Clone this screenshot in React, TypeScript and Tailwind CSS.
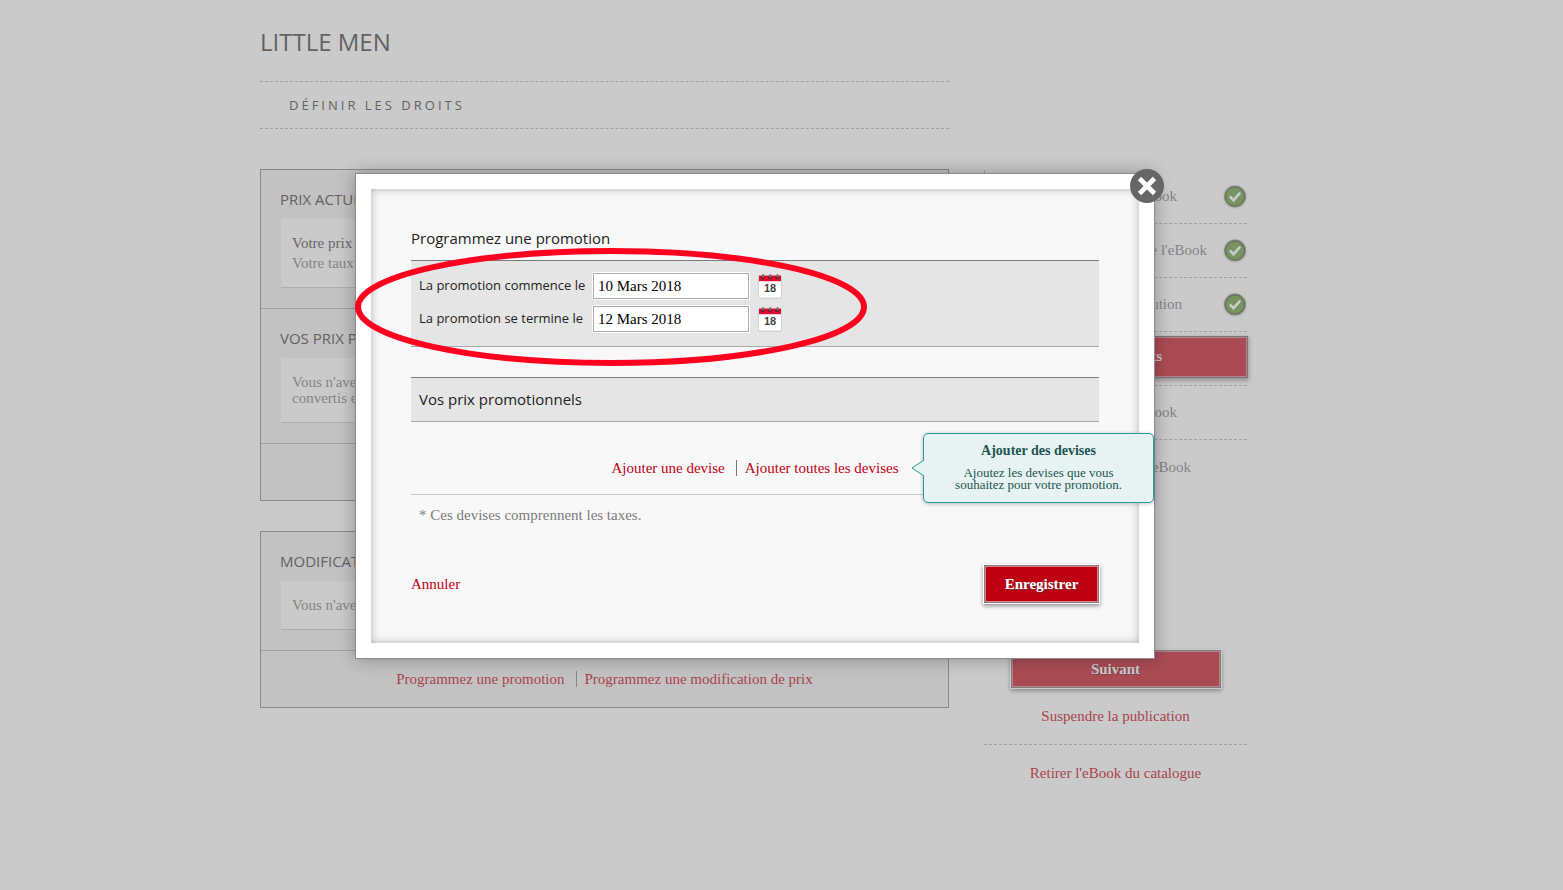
import React from "react";

const sans = "font-['Open_Sans','Trebuchet_MS',sans-serif] font-medium";
const serif = "font-[Georgia,'Liberation_Serif',serif]";

const steps = [
  { label: "Décrire l'eBook", width: "w-[192px]", state: "done" },
  { label: "Contenu de l'eBook", width: "w-[222px]", state: "done" },
  { label: "Distribution", width: "w-[197px]", state: "done" },
  { label: "Définir les droits", width: "w-[176px]", state: "current" },
  { label: "Publier l'eBook", width: "w-[192px]", state: "todo" },
  { label: "eBook", width: "w-[206px]", state: "todo" },
];

function CheckBadge() {
  return (
    <svg width="28" height="28" viewBox="0 1 28 28" aria-hidden="true" className="-mr-0.5 shrink-0">
      <circle cx="14" cy="15" r="12.5" fill="#000" opacity=".05" />
      <circle cx="14" cy="14.5" r="10.4" fill="#77935f" stroke="#8d8d8d" strokeWidth="1.2" />
      <circle cx="14" cy="14.5" r="9.6" fill="none" stroke="#5f6a58" strokeWidth="1" />
      <path d="M8.8 14.4l3.7 3.8 6.8-7.6" fill="none" stroke="#cacaca" strokeWidth="2.7" />
    </svg>
  );
}

function CalendarIcon() {
  return (
    <svg width="26" height="26" viewBox="0 0 26 26" aria-hidden="true">
      <rect x="1" y="2.5" width="24" height="23.5" rx="2" fill="#000" opacity=".08" />
      <rect x="2" y="2.5" width="22" height="22" rx="1" fill="#fff" />
      <path d="M2 2.5h22v5.7H2z" fill="#e3082f" />
      <g fill="#6f1f30">
        <circle cx="5.8" cy="4.4" r="1.9" />
        <circle cx="13" cy="4.4" r="1.9" />
        <circle cx="20.2" cy="4.4" r="1.9" />
      </g>
      <g fill="#777">
        <rect x="5.2" y="1" width="1.8" height="3.6" rx=".8" />
        <rect x="12.4" y="1" width="1.8" height="3.6" rx=".8" />
        <rect x="19.6" y="1" width="1.8" height="3.6" rx=".8" />
      </g>
      <text x="13" y="19" textAnchor="middle" fontSize="11" fontWeight="bold" fontFamily="Liberation Sans, sans-serif" fill="#444">
        18
      </text>
    </svg>
  );
}

function PanelSection({ title, children }: { title: string; children: React.ReactNode }) {
  return (
    <section className="border-b border-[#a0a0a0] px-[19px] pt-[19px] pb-5">
      <h2 className={`${sans} text-[15px] leading-5 text-[#636363]`}>{title}</h2>
      <div className="mt-[10px] ml-px border-b border-[#adadad] bg-[#cacaca] px-[11px] py-4 text-[15px] leading-4 text-[#858585]">
        {children}
      </div>
    </section>
  );
}

function DateField({ id, label, value }: { id: string; label: string; value: string }) {
  return (
    <div className="flex items-center">
      <label htmlFor={id} className={`${sans} w-[174px] whitespace-nowrap text-[13px] text-[#222]`}>
        {label}
      </label>
      <input
        id={id}
        type="text"
        defaultValue={value}
        className="h-[26px] w-[156px] border border-[#aaa] bg-white px-1 text-[15px] text-black outline outline-white"
      />
      <button type="button" aria-label="Choisir une date" className="ml-2">
        <CalendarIcon />
      </button>
    </div>
  );
}

function Dialog() {
  return (
    <div
      role="dialog"
      aria-labelledby="dialog-title"
      className="relative w-full max-w-[800px] border border-[#8c8c8c] bg-white p-[15px] shadow-[0_0_16px_rgba(0,0,0,0.3)]"
    >
      <button
        type="button"
        aria-label="Fermer"
        className="absolute -top-[5px] -right-[10px] flex size-[34px] items-center justify-center rounded-full bg-[#666]"
      >
        <svg width="20" height="20" viewBox="0 0 20 20" aria-hidden="true">
          <path d="M2.5 2.5l15 15M17.5 2.5l-15 15" stroke="#fff" strokeWidth="4.8" />
        </svg>
      </button>

      <form
        onSubmit={(e) => e.preventDefault()}
        className="bg-[#f8f8f8] px-10 pt-[37px] pb-10 shadow-[inset_0_0_10px_rgba(0,0,0,0.28)]"
      >
        <h2 id="dialog-title" className={`${sans} text-[15px] leading-6 text-[#222]`}>
          Programmez une promotion
        </h2>
        <div className="relative mt-[10px] border-t border-b border-t-[#7c7c7c] border-b-[#aaa] bg-[#e5e5e5] px-2 pt-3 pb-[14px]">
          <div className="space-y-[7px]">
            <DateField id="start" label="La promotion commence le" value="10 Mars 2018" />
            <DateField id="end" label="La promotion se termine le" value="12 Mars 2018" />
          </div>
          <svg
            width="512"
            height="120"
            viewBox="0 0 512 120"
            aria-hidden="true"
            className="pointer-events-none absolute -top-[14px] -left-14"
          >
            <ellipse cx="256" cy="60" rx="253" ry="56" fill="none" stroke="#ff001f" strokeWidth="6" />
          </svg>
        </div>
        <h3
          className={`${sans} mt-[30px] border-t border-b border-t-[#7c7c7c] border-b-[#aaa] bg-[#e5e5e5] px-2 pt-[9px] pb-[10px] text-[15px] leading-6 text-[#222]`}
        >
          Vos prix promotionnels
        </h3>
        <div className="relative flex items-center justify-center border-b border-[#c8c8c8] pt-7 pb-2 text-[15px] leading-5 text-[#bf0013]">
          <div className="flex h-9 items-center">
            <a href="#devise">Ajouter une devise</a>
            <span className="mr-2 ml-[11px] h-4 w-px bg-[#777]" />
            <a href="#devises">Ajouter toutes les devises</a>
          </div>
          <div
            role="tooltip"
            className="absolute top-[11px] -right-[55px] w-[231px] rounded-[5px] border border-[#259b93] bg-[#e7f3f3] py-[11px] text-center text-[13px] leading-3 text-[#1c5552] shadow-[0_1px_4px_rgba(0,0,0,0.25)]"
          >
            <svg width="14" height="18" viewBox="0 0 14 18" aria-hidden="true" className="absolute top-[25px] -left-[13px]">
              <path d="M14 0.8L13 1 1 9l12 8 1 .2z" fill="#e7f3f3" />
              <path d="M13 1L1 9l12 8" fill="none" stroke="#259b93" />
            </svg>
            <p className="text-[14px] leading-3 font-bold">Ajouter des devises</p>
            <p className="mt-[10px]">
              Ajoutez les devises que vous
              <br />
              souhaitez pour votre promotion.
            </p>
          </div>
        </div>
        <p className="mt-[10px] px-2 text-[15px] leading-5 text-[#7c7c7c]">* Ces devises comprennent les taxes.</p>
        <div className="mt-10 flex items-center justify-between">
          <a href="#annuler" className="text-[15px] text-[#bf0013]">
            Annuler
          </a>
          <button
            type="submit"
            className="h-[38px] w-[115px] border border-[#828282] bg-[#bf0013] text-[15px] font-bold text-white shadow-[inset_0_0_0_1px_#dd8088,0_0_0_1px_#fff,0_2px_4px_1px_rgba(0,0,0,0.4)] [text-shadow:1px_1px_0_#7c3038]"
          >
            Enregistrer
          </button>
        </div>
      </form>
    </div>
  );
}

export default function App() {
  return (
    <div className={`${serif} relative min-h-screen bg-[#cacaca]`}>
      <div className="mx-auto flex max-w-[1043px] gap-[35px] pr-14">
        <main className="min-w-0 flex-1 pt-6">
          <h1 className={`${sans} text-[24px] leading-9 text-[#636363]`}>LITTLE MEN</h1>
          <div
            className={`${sans} mt-[21px] border-t border-b border-dashed border-[#a0a0a0] px-[29px] py-[11px] text-[13px] leading-6 tracking-[3px] text-[#636363]`}
          >
            DÉFINIR LES DROITS
          </div>

          <div className="mt-10 border border-[#8a8a8a] bg-[#c2c2c2]">
            <PanelSection title="PRIX ACTUELS">
              <div className="-my-0.5 leading-5">
                <p className="text-[#666]">Votre prix actuel</p>
                <p>Votre taux de redevance</p>
              </div>
            </PanelSection>
            <PanelSection title="VOS PRIX PROMOTIONNELS">
              Vous n'avez pas de prix
              <br />
              convertis en
            </PanelSection>
            <div className="h-14" />
          </div>

          <div className="mt-[30px] border border-[#8a8a8a] bg-[#c2c2c2]">
            <PanelSection title="MODIFICATIONS DE PRIX">Vous n'avez pas de modification</PanelSection>
            <div className="flex h-14 items-center justify-center text-[15px] text-[#a8444e]">
              <a href="#promotion">Programmez une promotion</a>
              <span className="mr-2 ml-[11px] h-4 w-px bg-[#888]" />
              <a href="#modification">Programmez une modification de prix</a>
            </div>
          </div>
        </main>

        <aside className="w-[263px] shrink-0 pt-[170px]">
          <ol className="border-l border-[#a0a0a0] text-[15px] text-[#858585]">
            {steps.map((step, i) => (
              <li
                key={step.label}
                className={`flex h-[54px] items-center border-dashed border-[#a0a0a0] ${i < steps.length - 1 ? "border-b" : ""}`}
              >
                {step.state === "current" ? (
                  <a
                    href="#droits"
                    className="-mr-px mb-1 flex h-[42px] flex-1 items-center border border-[#777] bg-[#aa4b54] font-bold text-[#cacaca] shadow-[inset_0_0_0_1px_#b58087,0_2px_4px_1px_rgba(0,0,0,0.25)]"
                  >
                    <span className={`${step.width} text-right whitespace-nowrap`}>{step.label}</span>
                  </a>
                ) : (
                  <a href="#etape" className="flex w-full items-center justify-between">
                    <span className={`${step.width} text-right whitespace-nowrap`}>{step.label}</span>
                    {step.state === "done" && <CheckBadge />}
                  </a>
                )}
              </li>
            ))}
          </ol>
          <div className="mt-[156px] flex flex-col items-center text-[15px] leading-5 text-[#a8444e]">
            <button
              type="button"
              className="h-[38px] w-[210px] border border-[#7e7e7e] bg-[#aa4b54] font-bold text-[#cacaca] shadow-[inset_0_0_0_1px_#b58087,0_0_0_1px_#cacaca,0_2px_4px_1px_rgba(0,0,0,0.3)] [text-shadow:1px_1px_0_#7c4a50]"
            >
              Suivant
            </button>
            <a href="#suspendre" className="mt-[18px]">
              Suspendre la publication
            </a>
            <hr className="my-[18px] w-full border-t border-dashed border-[#a0a0a0]" />
            <a href="#retirer">Retirer l'eBook du catalogue</a>
          </div>
        </aside>
      </div>

      <div className="absolute inset-0 flex items-start justify-center pt-[173px] pr-[53px]">
        <Dialog />
      </div>
    </div>
  );
}
